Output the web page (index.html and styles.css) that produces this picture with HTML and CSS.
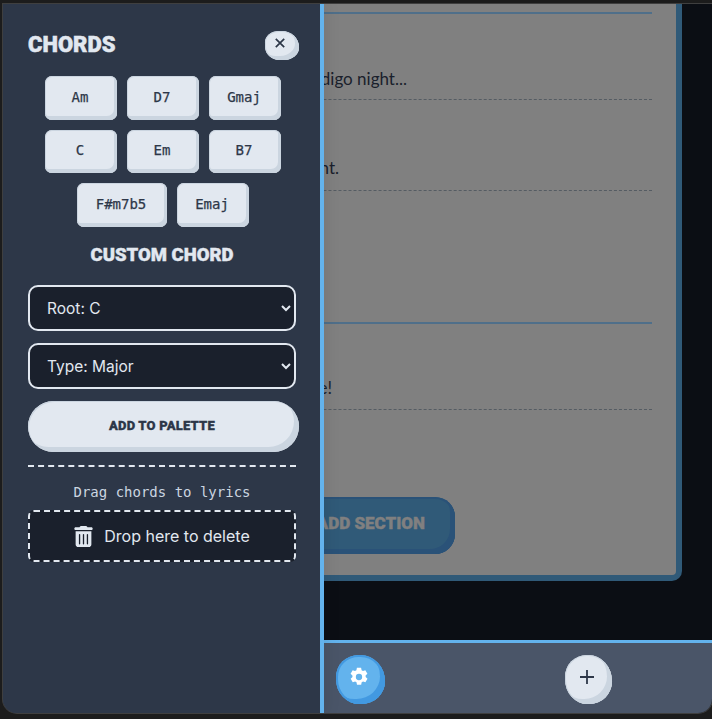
FILE: index.html
```html
<!DOCTYPE html>
<html lang="en">
<head>
<meta charset="utf-8">
<title>Chords</title>
<link rel="stylesheet" href="styles.css">
</head>
<body>
<div class="window">
  <main class="main">
    <div class="stage">
      <div class="sheet">
        <section class="section">
          <div class="line l1">In the indigo night...</div>
          <div class="line l2">Lost in the moment.</div>
        </section>
        <section class="section second">
          <div class="line l3">Sing it out loud, feel the fire!</div>
        </section>
        <button class="add-section">ADD SECTION</button>
      </div>
    </div>
    <div class="toolbar">
      <button class="gear">
        <svg width="20" height="20" viewBox="0 0 24 24"><path fill="#fff" fill-rule="evenodd" d="M9.500 1h5l.6 3 1.700.9 2.800-1 2.500 4.300-2.200 2 .1 1.800 2.200 2-2.500 4.300-2.800-1-1.700.9-.6 3h-5l-.6-3-1.700-.9-2.800 1-2.500-4.300 2.200-2-.1-1.800-2.200-2 2.500-4.300 2.800 1 1.700-.9zM12 8.200a3.800 3.800 0 1 0 0 7.600 3.800 3.800 0 0 0 0-7.600z"/></svg>
      </button>
      <button class="plus">
        <svg width="16" height="16" viewBox="0 0 16 16"><path d="M8 1v14M1 8h14" stroke="#2d3748" stroke-width="1.800" fill="none"/></svg>
      </button>
    </div>
  </main>
  <aside class="panel">
    <div class="panel-head">
      <h2 class="title">CHORDS</h2>
      <button class="close">
        <svg width="12" height="12" viewBox="0 0 12 12"><path d="M1.800 1.800l8.400 8.400M10.200 1.800l-8.400 8.400" stroke="#2d3748" stroke-width="1.700" fill="none"/></svg>
      </button>
    </div>
    <div class="palette">
      <div class="chord">Am</div><div class="chord">D7</div><div class="chord">Gmaj</div>
      <div class="chord short">C</div><div class="chord short">Em</div><div class="chord short">B7</div>
      <div class="chord wide">F#m7b5</div><div class="chord">Emaj</div>
    </div>
    <h3 class="subtitle">CUSTOM CHORD</h3>
    <select class="pick"><option>Root: C</option><option>Root: D</option></select>
    <select class="pick"><option>Type: Major</option><option>Type: Minor</option></select>
    <button class="add">ADD TO PALETTE</button>
    <div class="hint">Drag chords to lyrics</div>
    <div class="trash">
      <svg width="19" height="21" viewBox="0 0 448 512"><path fill="#e2e8f0" d="M135 17.700C140.400 6.800 151.500 0 163.600 0h120.800c12.100 0 23.200 6.800 28.600 17.700L320 32h96c17.700 0 32 14.300 32 32s-14.300 32-32 32H32C14.300 96 0 81.700 0 64s14.300-32 32-32h96l7-14.300zM32 128h384v320c0 35.300-28.700 64-64 64H96c-35.300 0-64-28.700-64-64V128zm96 64c-8.800 0-16 7.200-16 16v224c0 8.800 7.200 16 16 16s16-7.200 16-16V208c0-8.800-7.200-16-16-16zm96 0c-8.800 0-16 7.200-16 16v224c0 8.800 7.200 16 16 16s16-7.200 16-16V208c0-8.800-7.200-16-16-16zm96 0c-8.800 0-16 7.200-16 16v224c0 8.800 7.200 16 16 16s16-7.200 16-16V208c0-8.800-7.200-16-16-16z"/></svg>
      <span>Drop here to delete</span>
    </div>
  </aside>
</div>
</body>
</html>
```
FILE: styles.css
```css
* { box-sizing: border-box; }
html, body { margin: 0; }
body { width: 712px; height: 719px; padding: 4px 0 6px 3px; background: #1c1c1c; overflow: hidden; font-family: Inter, "Noto Sans", sans-serif; }
.window { position: relative; height: 709px; border-radius: 0 0 14px 14px; overflow: hidden; box-shadow: 0 0 0 1px #3f3f3f; background: #0b0e14; }

/* drawer over the page */
.panel { position: absolute; left: 0; top: 0; bottom: 0; width: 321px; background: #2d3748; border-right: 4px solid #63b3ed; box-shadow: 3px 0 14px rgba(0, 0, 0, .08); padding: 27px 24px 0 25px; display: flex; flex-direction: column; }
.panel-head { display: flex; justify-content: space-between; align-items: center; height: 29px; }
.title { margin: 0 0 2px; font: 900 22px/1 Roboto, sans-serif; -webkit-text-stroke: .5px #e2e8f0; color: #e2e8f0; }
.close { width: 34px; height: 29px; margin-right: -3px; padding: 0 4px 5px 0; border: 0; border-radius: 48% 58% 50% 50% / 45% 65% 50% 55%; background: #e2e8f0; box-shadow: inset -4px -4px 0 #cbd5e0, inset 0 0 0 1px #cbd5e0; display: flex; align-items: center; justify-content: center; }
.palette { display: flex; flex-wrap: wrap; justify-content: center; gap: 10px; margin: 16px 0 0 2px; }
.chord { width: 72px; height: 44px; padding: 0 2px 3px 0; background: #e2e8f0; border-radius: 7px; box-shadow: inset -3px -4px 0 #cbd5e0, inset 0 0 0 1px #cbd5e0; display: flex; align-items: center; justify-content: center; font: 400 14px "DejaVu Sans Mono", monospace; -webkit-text-stroke: .25px #2d3748; color: #2d3748; }
.chord.short { height: 43px; }
.chord.wide { width: 90px; }
.subtitle { margin: 16px 0 0; height: 24px; text-align: center; font: 900 18.500px/24px Roboto, sans-serif; -webkit-text-stroke: .4px #e2e8f0; color: #e2e8f0; }
.pick { display: block; width: 100%; height: 46px; margin-top: 18px; padding: 0 0 0 13px; border: 2px solid #e2e8f0; border-radius: 10px; background: #1a202c; color: #e2e8f0; font: 15.500px Inter, sans-serif; }
.pick + .pick { margin-top: 12px; }
.add { display: block; width: 271px; height: 51px; margin-top: 12px; border: 0; border-radius: 26px; background: #e2e8f0; box-shadow: inset -5px -5px 0 #cbd5e0, inset 1px 1px 0 #cbd5e0; padding: 0 3px 3px 0; font: 900 13px Roboto, sans-serif; letter-spacing: .2px; -webkit-text-stroke: .3px #2d3748; color: #2d3748; }
.hint { margin-top: 13px; padding-top: 17px; border-top: 2px dashed #e2e8f0; text-align: center; font: 14px/17px "DejaVu Sans Mono", monospace; color: #cbd5e0; }
.trash { height: 52px; margin-top: 9px; display: flex; align-items: center; justify-content: center; gap: 11px; border: 2px dashed #e2e8f0; border-radius: 6px; background: #1a202c; color: #e2e8f0; font-size: 16px; }

/* page beneath */
.main { height: 100%; display: flex; flex-direction: column; }
.stage { flex: 1; min-height: 0; padding: 0 30px 59px 20px; display: flex; }
.sheet { flex: 1; padding: 8px 24px 0 20px; background: #808080; border-right: 6px solid #305a78; border-bottom: 6px solid #305a78; border-radius: 0 0 10px 0; }
.section { border-top: 2px solid #4f6f8a; }
.section.second { margin-top: 131px; }
.line { display: flex; align-items: flex-end; justify-content: flex-end; border-bottom: 1px dashed #555c63; padding-bottom: 8px; font: 17px/24px Lato, sans-serif; color: #1a202c; white-space: nowrap; }
.l1 { height: 86px; padding-right: 245px; }
.l2 { height: 91px; padding-right: 313px; padding-bottom: 10px; }
.l3 { height: 86px; padding-right: 320px; padding-bottom: 9px; }
.add-section { display: block; width: 172px; height: 57px; margin: 87px 0 0 240px; border: 0; border-radius: 20px; background: #305a78; box-shadow: inset -5px -5px 0 #2a5278, inset 0 0 0 2px #2a5278; padding: 0 30px 6px 0; text-align: right; font: 900 17px Roboto, sans-serif; -webkit-text-stroke: .4px #808080; color: #808080; }
.toolbar { flex: none; height: 73px; padding: 12px 0 0 333px; display: flex; align-items: flex-start; gap: 180px; background: #4a5568; border-top: 3px solid #63b3ed; }
.gear, .plus { width: 49px; height: 49px; padding: 0 4px 5px 0; border: 0; border-radius: 48% 52% 50% 50% / 46% 56% 48% 52%; display: flex; align-items: center; justify-content: center; }
.gear { background: #63b3ed; box-shadow: inset -5px -5px 0 #4299e1, inset 0 0 0 2px #4299e1; }
.plus { width: 47px; background: #e2e8f0; box-shadow: inset -5px -5px 0 #cbd5e0, inset 0 0 0 1px #cbd5e0; }
```
